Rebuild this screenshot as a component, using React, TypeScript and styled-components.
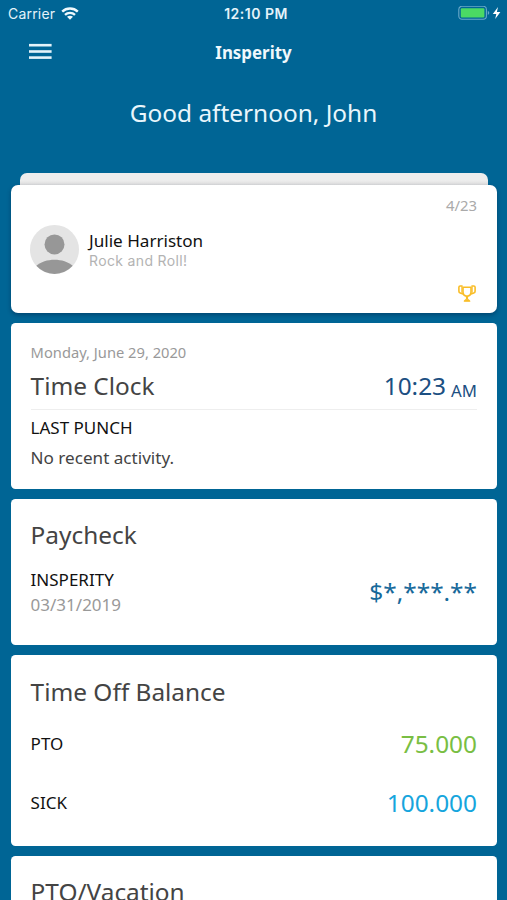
import React from 'react';
import styled, { createGlobalStyle } from 'styled-components';

const GlobalStyle = createGlobalStyle`
  * { box-sizing: border-box; }
  html, body { margin: 0; background: #006595; }
  body { font-family: "Noto Sans", sans-serif; overflow: hidden; }
`;

const Screen = styled.div`
  width: 507px;
  height: 900px;
  overflow: hidden;
  background: #006595;
`;

const StatusBar = styled.header`
  display: grid;
  grid-template-columns: 1fr auto 1fr;
  align-items: center;
  height: 27px;
  padding: 0 5px 0 8px;
  color: #e4f3fa;
  font-family: Inter, sans-serif;
  font-size: 14px;
  line-height: 27px;
`;

const Carrier = styled.div`
  display: flex;
  align-items: center;
  gap: 6px;
  letter-spacing: 0.2px;
`;

const Clock = styled.div`
  font-size: 14px;
  font-weight: 600;
  letter-spacing: 0.5px;
  padding-left: 2px;
`;

const Battery = styled.div`
  display: flex;
  justify-content: flex-end;
`;

const NavBar = styled.nav`
  display: grid;
  grid-template-columns: 1fr auto 1fr;
  align-items: center;
  height: 54px;
  padding: 0 28px;
`;

const MenuButton = styled.button`
  display: flex;
  width: 23px;
  margin: 0 0 5px 1px;
  padding: 0;
  border: 0;
  background: none;
`;

const NavTitle = styled.h1`
  margin: 0;
  padding-bottom: 2px;
  color: #f0f8fc;
  font-size: 16.9px;
  font-weight: 700;
  line-height: 52px;
`;

const Greeting = styled.p`
  margin: 12px 0 0;
  height: 40px;
  color: #e9f6fc;
  font-size: 24.4px;
  line-height: 40px;
  text-align: center;
`;

const Feed = styled.main`
  display: flex;
  flex-direction: column;
  padding: 40px 10px 0 10.6px;
`;

const StackEdge = styled.div`
  height: 12px;
  margin: 0 9.4px 0 9.8px;
  border-radius: 7px 7px 0 0;
  background: linear-gradient(#ededed 60%, #dedede);
`;

const Card = styled.section<{ $height: number; $raised?: boolean }>`
  flex: none;
  height: ${(p) => p.$height}px;
  margin-bottom: 10px;
  padding: 0 20px;
  border-radius: ${(p) => (p.$raised ? 7 : 4.5)}px;
  background: #fff;
  box-shadow: ${(p) => (p.$raised ? '0 2px 4px rgba(0, 25, 60, 0.4)' : 'none')};
`;

const CardHeading = styled.h2`
  margin: 0;
  padding-top: 20.6px;
  color: #444;
  font-size: 24.4px;
  font-weight: 400;
  line-height: 32px;
`;

const PostDate = styled.div`
  padding-top: 10px;
  color: #aaa;
  font-size: 14.9px;
  line-height: 21px;
  text-align: right;
`;

const Author = styled.div`
  display: flex;
  align-items: center;
  gap: 9.8px;
  height: 49px;
  margin: 9px 0 0 -0.4px;
`;

const AuthorName = styled.div`
  color: #111;
  font-size: 17.1px;
  line-height: 22px;
`;

const Message = styled.div`
  color: #b3b3b3;
  font-family: Inter, sans-serif;
  font-size: 14px;
  letter-spacing: 0.35px;
  line-height: 18px;
`;

const Award = styled.div`
  display: flex;
  justify-content: flex-end;
  margin: 9.5px 0 0 0;
`;

const Today = styled.div`
  padding-top: 18px;
  color: #999;
  font-size: 14.7px;
  line-height: 22px;
`;

const ClockRow = styled.div`
  display: flex;
  justify-content: space-between;
  height: 46.5px;
  border-bottom: 1.4px solid #eee;
  color: #444;
  font-size: 24.4px;
  line-height: 45px;
`;

const Time = styled.div`
  display: flex;
  align-items: baseline;
  gap: 5px;
  color: #1c4f82;
`;

const Meridiem = styled.span`
  font-size: 16.8px;
  transform: translateY(2px);
`;

const Label = styled.div`
  color: #111;
  font-size: 17px;
  line-height: 24px;
`;

const PunchLabel = styled(Label)`
  padding-top: 6px;
`;

const Activity = styled.div`
  padding-top: 6px;
  color: #444;
  font-size: 17.1px;
  line-height: 24px;
`;

const PayRow = styled.div`
  display: flex;
  align-items: center;
  justify-content: space-between;
  height: 50px;
  margin-top: 16.4px;
`;

const PayDate = styled(Label)`
  padding-top: 1px;
  color: #999;
`;

const Amount = styled.div<{ $color: string }>`
  color: ${(p) => p.$color};
  font-size: 24.4px;
  line-height: 32px;
`;

const BalanceList = styled.div`
  padding-top: 7px;
`;

const BalanceRow = styled.div`
  display: flex;
  align-items: center;
  justify-content: space-between;
  height: 58.5px;
`;

const balances = [
  { name: 'PTO', hours: '75.000', color: '#79be43' },
  { name: 'SICK', hours: '100.000', color: '#16a5dd' },
];

const WifiIcon = () => (
  <svg width="18" height="13" viewBox="0 0 18 13" fill="none" stroke="#f0f9fd" strokeWidth="2.4">
    <path d="M1.2 4.7C5.6.5 12.4.5 16.8 4.7" />
    <path d="M4 7.8C6.8 5.2 11.2 5.2 14 7.8" />
    <path d="M9 12.7 6 9.8C7.7 8.3 10.3 8.3 12 9.8Z" fill="#f0f9fd" stroke="none" />
  </svg>
);

const MenuIcon = () => (
  <svg width="23" height="17" viewBox="0 0 23 17" fill="#e4f3fa">
    <rect y="0.9" width="22.6" height="2.6" />
    <rect y="7.2" width="22.6" height="2.6" />
    <rect y="13.3" width="22.6" height="2.6" />
  </svg>
);

const BatteryIcon = () => (
  <svg width="44" height="15" viewBox="0 0 44 15">
    <rect x="0.8" y="0.3" width="27.6" height="13" rx="3.2" fill="none" stroke="#69a9c9" strokeWidth="1.1" />
    <rect x="2.8" y="2.2" width="23.6" height="9.2" rx="1" fill="#4bd964" />
    <path d="M29.8 4.7q3 2.1 0 4.2z" fill="#69a9c9" />
    <path d="M40 1.1 34.8 7.9h3.5l-1.1 5.2 5.2-7.2h-3.5z" fill="#fff" />
  </svg>
);

const AvatarIcon = () => (
  <svg width="49" height="49" viewBox="0 0 49 49">
    <circle cx="24.5" cy="24.5" r="24.5" fill="#e4e4e4" />
    <circle cx="24.5" cy="19.4" r="10" fill="#979797" />
    <path d="M6.3 40.8C15 32.6 34 32.6 42.7 40.8A24.5 24.5 0 0 1 6.3 40.8Z" fill="#979797" />
  </svg>
);

const TrophyIcon = () => (
  <svg width="20" height="19" viewBox="0 0 20 19" fill="none" stroke="#f9bd27" strokeWidth="1.6" strokeLinejoin="round">
    <path d="M6 3.2h8v5c0 1.9-1.4 3.4-2.9 3.9H8.9C7.4 11.6 6 10.1 6 8.2z" />
    <path d="M5.6 2H3.2Q1.9 2 1.9 3.3v4q0 1.4 1.3 1.7l2.9 1M14.4 2h2.4q1.3 0 1.3 1.3v4q0 1.4-1.3 1.7l-2.9 1" />
    <path d="M4.9 2.2v6.5M15.1 2.2v6.5" strokeWidth="1.2" />
    <path d="M10 12v3.5" strokeWidth="2.2" />
    <path d="M7.2 17.2h5.6l-1.4-1.5H8.6z" fill="#f9bd27" strokeWidth="1.1" />
  </svg>
);

export default function App() {
  return (
    <Screen>
      <GlobalStyle />
      <StatusBar>
        <Carrier>
          Carrier
          <WifiIcon />
        </Carrier>
        <Clock>12:10 PM</Clock>
        <Battery>
          <BatteryIcon />
        </Battery>
      </StatusBar>
      <NavBar>
        <MenuButton aria-label="Menu">
          <MenuIcon />
        </MenuButton>
        <NavTitle>Insperity</NavTitle>
      </NavBar>
      <Greeting>Good afternoon, John</Greeting>
      <Feed>
        <StackEdge />
        <Card $height={128} $raised>
          <PostDate>4/23</PostDate>
          <Author>
            <AvatarIcon />
            <div>
              <AuthorName>Julie Harriston</AuthorName>
              <Message>Rock and Roll!</Message>
            </div>
          </Author>
          <Award>
            <TrophyIcon />
          </Award>
        </Card>
        <Card $height={165.5}>
          <Today>Monday, June 29, 2020</Today>
          <ClockRow>
            <span>Time Clock</span>
            <Time>
              10:23 <Meridiem>AM</Meridiem>
            </Time>
          </ClockRow>
          <PunchLabel>LAST PUNCH</PunchLabel>
          <Activity>No recent activity.</Activity>
        </Card>
        <Card $height={146.7}>
          <CardHeading>Paycheck</CardHeading>
          <PayRow>
            <div>
              <Label>INSPERITY</Label>
              <PayDate>03/31/2019</PayDate>
            </div>
            <Amount $color="#17699a">$*,***.**</Amount>
          </PayRow>
        </Card>
        <Card $height={190.5}>
          <CardHeading>Time Off Balance</CardHeading>
          <BalanceList>
            {balances.map((b) => (
              <BalanceRow key={b.name}>
                <Label>{b.name}</Label>
                <Amount $color={b.color}>{b.hours}</Amount>
              </BalanceRow>
            ))}
          </BalanceList>
        </Card>
        <Card $height={190}>
          <CardHeading>PTO/Vacation</CardHeading>
        </Card>
      </Feed>
    </Screen>
  );
}
